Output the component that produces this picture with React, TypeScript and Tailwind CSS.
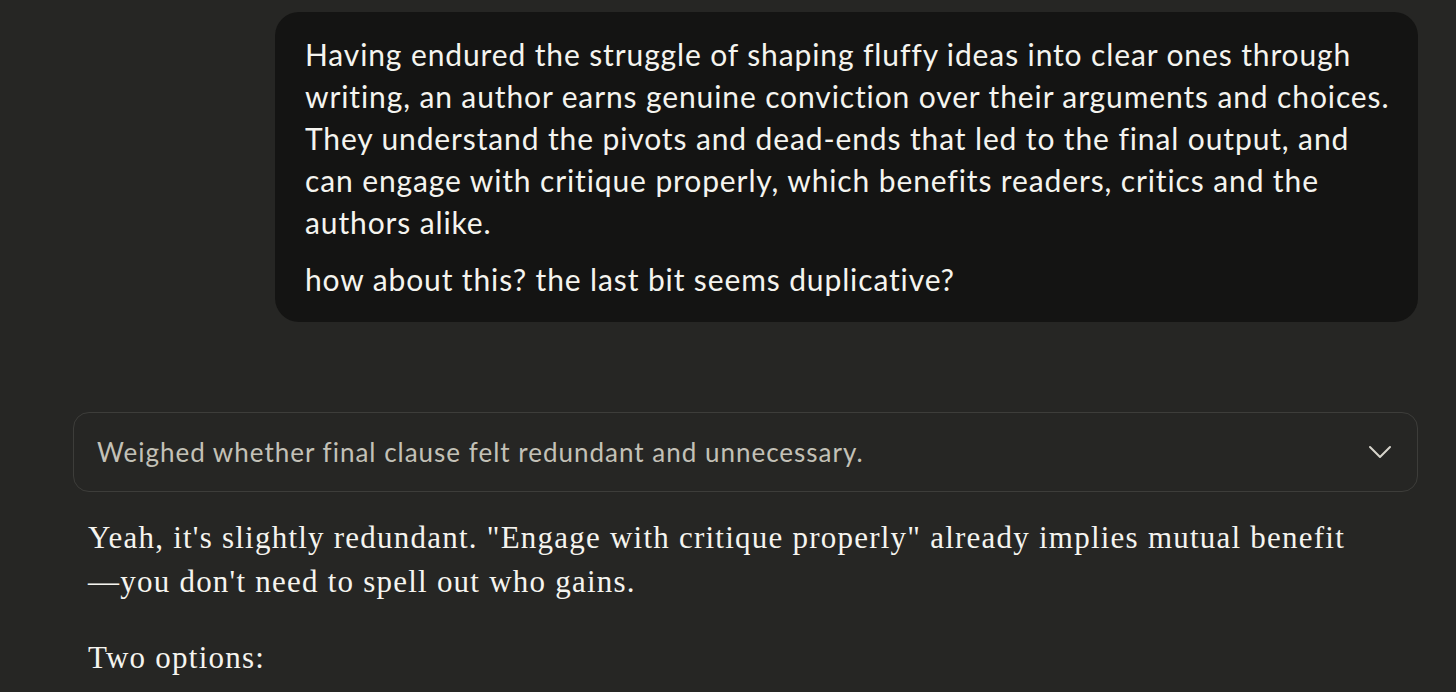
import { ChevronDown } from "lucide-react";

const userLines = [
  "Having endured the struggle of shaping fluffy ideas into clear ones through",
  "writing, an author earns genuine conviction over their arguments and choices.",
  "They understand the pivots and dead-ends that led to the final output, and",
  "can engage with critique properly, which benefits readers, critics and the",
  "authors alike.",
];

const sans = { fontFamily: "Lato, 'Open Sans', sans-serif" };

export default function App() {
  return (
    <div className="min-h-screen bg-[#262624] overflow-hidden">
      <div className="pl-[73px] pr-[38px] pt-[12px]">
        {/* user message */}
        <div className="flex justify-end">
          <div
            className="w-[1143px] bg-[#141413] rounded-[24px] pl-[30px] pr-[20px] pt-[21px] pb-[22px] text-[#f5f4ef] text-[30px] leading-[42px] tracking-[0.88px] flex flex-col gap-[15px] whitespace-nowrap"
            style={sans}
          >
            <p>
              {userLines.map((l) => (
                <span key={l} className="block">
                  {l}
                </span>
              ))}
            </p>
            <p>how about this? the last bit seems duplicative?</p>
          </div>
        </div>

        {/* thinking summary */}
        <div className="mt-[90px] h-[80px] border border-[#3d3d3a] rounded-[16px] flex items-center justify-between pl-[23px] pr-[17px]">
          <span className="text-[26px] tracking-[1px] text-[#c3c1b7]" style={sans}>
            Weighed whether final clause felt redundant and unnecessary.
          </span>
          <ChevronDown className="w-[40px] h-[40px] text-[#d6d4cb]" strokeWidth={1.2} />
        </div>

        {/* assistant reply */}
        <div
          className="pl-[15px] pr-[20px] pt-[24px] text-[#f5f4ef] text-[31px] leading-[44px] tracking-[1.23px] flex flex-col gap-[32px]"
          style={{ fontFamily: "'Liberation Serif', serif" }}
        >
          <p className="whitespace-nowrap">
            <span className="block">
              Yeah, it's slightly redundant. "Engage with critique properly" already implies mutual benefit
            </span>
            <span className="block">—you don't need to spell out who gains.</span>
          </p>
          <p>Two options:</p>
        </div>
      </div>
    </div>
  );
}
